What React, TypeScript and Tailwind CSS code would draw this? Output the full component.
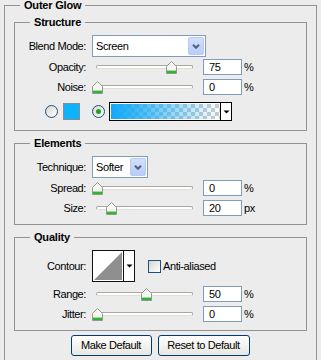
import React from "react";

const Thumb = () => (
  <svg width="11" height="13" viewBox="0 0 11 13">
    <path d="M0.5 12.5V5.5L5.5 0.5L10.5 5.5V12.5Z" fill="#f6f6f3" stroke="#8f9a8f" />
    <rect x="1" y="10" width="9" height="2" fill="#31b531" />
    <rect x="1" y="9" width="9" height="1" fill="#9fdc9f" />
  </svg>
);

function Slider({ left }: { left: number }) {
  return (
    <div className="relative w-[105px] h-[13px] flex items-center">
      <div className="mx-[4px] flex-1 h-[4px] rounded-[2px] border border-[#a8a8a0] border-b-[#e0e0da] bg-white" />
      <div className="absolute top-0 h-[13px]" style={{ left }}>
        <Thumb />
      </div>
    </div>
  );
}

function NumBox({ value }: { value: string }) {
  return (
    <div className="ml-[6px] w-[39px] h-[16px] border border-[#7f9db9] bg-white pl-[5px] leading-[14px]">
      {value}
    </div>
  );
}

function Row({ label, children, className = "" }: { label: string; children: React.ReactNode; className?: string }) {
  return (
    <div className={"flex items-center " + className}>
      <div className="w-[71px] mr-[6px] text-right">{label}</div>
      {children}
    </div>
  );
}

function SliderRow({ label, left, value, unit, className = "" }: { label: string; left: number; value: string; unit: string; className?: string }) {
  return (
    <Row label={label} className={"h-[16px] " + className}>
      <Slider left={left} />
      <NumBox value={value} />
      <span className="ml-[2px]">{unit}</span>
    </Row>
  );
}

function Chevron() {
  return (
    <span className="w-[16px] h-[18px] rounded-[2px] border border-[#b8cbf5] bg-linear-to-b from-[#d2defc] to-[#b9cdfa] flex items-center justify-center">
      <svg width="8" height="5" viewBox="0 0 8 5">
        <path d="M1 0.8L4 3.8L7 0.8" fill="none" stroke="#4d6185" strokeWidth="2" />
      </svg>
    </span>
  );
}

function Select({ value, w }: { value: string; w: string }) {
  return (
    <div className={"h-[22px] border border-[#7f9db9] bg-white flex items-center pl-[3px] pr-[1px] " + w}>
      <span className="flex-1">{value}</span>
      <Chevron />
    </div>
  );
}

function Radio({ checked }: { checked?: boolean }) {
  return (
    <span className="w-[13px] h-[13px] rounded-full border border-[#1c5180] bg-linear-to-br from-[#d6d6d0] to-white flex items-center justify-center">
      {checked && <span className="w-[5px] h-[5px] rounded-full bg-[#21a121]" />}
    </span>
  );
}

function GradientSwatch() {
  return (
    <svg width="123" height="19" viewBox="0 0 123 19">
      <defs>
        <pattern id="chk" width="8" height="8" patternUnits="userSpaceOnUse" x="2" y="2">
          <rect width="8" height="8" fill="#ffffff" />
          <rect width="4" height="4" fill="#cccccc" />
          <rect x="4" y="4" width="4" height="4" fill="#cccccc" />
        </pattern>
        <linearGradient id="glow" x1="0" x2="1" y1="0" y2="0">
          <stop offset="0" stopColor="#12aaf8" stopOpacity="1" />
          <stop offset="0.2" stopColor="#12aaf8" stopOpacity="0.85" />
          <stop offset="1" stopColor="#12aaf8" stopOpacity="0" />
        </linearGradient>
      </defs>
      <rect x="0.5" y="0.5" width="122" height="18" fill="#fff" stroke="#000" />
      <rect x="2" y="2" width="109" height="15" fill="url(#chk)" />
      <rect x="2" y="2" width="109" height="15" fill="url(#glow)" />
      <path d="M111.5 0V19" stroke="#000" />
      <path d="M114.5 8.5H120.5L117.5 11.5Z" fill="#000" />
    </svg>
  );
}

function Contour() {
  return (
    <svg width="43" height="32" viewBox="0 0 43 32">
      <rect x="0.5" y="0.5" width="42" height="31" fill="#fff" stroke="#111" />
      <path d="M2 30L30 2V30Z" fill="#8f8f8f" />
      <path d="M31.5 0V32" stroke="#111" />
      <path d="M34.5 14.5H40.5L37.5 17.5Z" fill="#000" />
    </svg>
  );
}

function Group({ title, children, className = "" }: { title: string; children: React.ReactNode; className?: string }) {
  return (
    <fieldset className={"mx-[9px] border border-[#929292] " + className}>
      <legend className="ml-[15px] px-[4px] h-[13px] leading-[13px] font-bold tracking-[-0.2px]">{title}</legend>
      {children}
    </fieldset>
  );
}

export default function App() {
  return (
    <div className="w-[321px] h-[360px] overflow-hidden bg-[#ececec] text-black text-[11px] tracking-[-0.4px] font-['Liberation_Sans',Arial,sans-serif]">
      <fieldset className="ml-[4px] w-[313px] border border-b-0 border-[#929292] pb-[20px]">
        <legend className="ml-[15px] px-[4px] h-[11px] leading-[11px] font-bold tracking-[-0.2px]">Outer Glow</legend>

        <Group title="Structure" className="mt-[5px] pt-[6px] pb-[9px]">
          <Row label="Blend Mode:" className="h-[22px]">
            <Select value="Screen" w="w-[114px]" />
          </Row>
          <SliderRow label="Opacity:" left={74} value="75" unit="%" className="mt-[2px]" />
          <SliderRow label="Noise:" left={0} value="0" unit="%" className="mt-[4px]" />
          <div className="mt-[7px] h-[19px] flex items-center">
            <span className="ml-[30px]"><Radio /></span>
            <span className="ml-[5px] w-[17px] h-[17px] border border-[#8c8c8c] bg-[#0cb4ff]" />
            <span className="ml-[12px]"><Radio checked /></span>
            <span className="ml-[4px] flex"><GradientSwatch /></span>
          </div>
        </Group>

        <Group title="Elements" className="mt-[6px] pt-[6px] pb-[8px]">
          <Row label="Technique:" className="h-[22px]">
            <Select value="Softer" w="w-[56px]" />
          </Row>
          <SliderRow label="Spread:" left={0} value="0" unit="%" className="mt-[2px]" />
          <SliderRow label="Size:" left={14} value="20" unit="px" className="mt-[4px]" />
        </Group>

        <Group title="Quality" className="mt-[6px] pt-[6px] pb-[8px]">
          <Row label="Contour:" className="h-[32px]">
            <span className="flex"><Contour /></span>
            <span className="ml-[13px] w-[13px] h-[13px] border border-[#1c5180] bg-linear-to-br from-[#d6d6d0] to-white" />
            <span className="ml-[2px]">Anti-aliased</span>
          </Row>
          <SliderRow label="Range:" left={49} value="50" unit="%" className="mt-[4px]" />
          <SliderRow label="Jitter:" left={0} value="0" unit="%" className="mt-[4px]" />
        </Group>

        <div className="mt-[4px] flex justify-center gap-[6px] pr-[1px]">
          <button className="w-[81px] h-[21px] border border-[#003c74] rounded-[3px] bg-linear-to-b from-white to-[#e8e7e0]">Make Default</button>
          <button className="w-[92px] h-[21px] border border-[#003c74] rounded-[3px] bg-linear-to-b from-white to-[#e8e7e0]">Reset to Default</button>
        </div>
      </fieldset>
    </div>
  );
}
